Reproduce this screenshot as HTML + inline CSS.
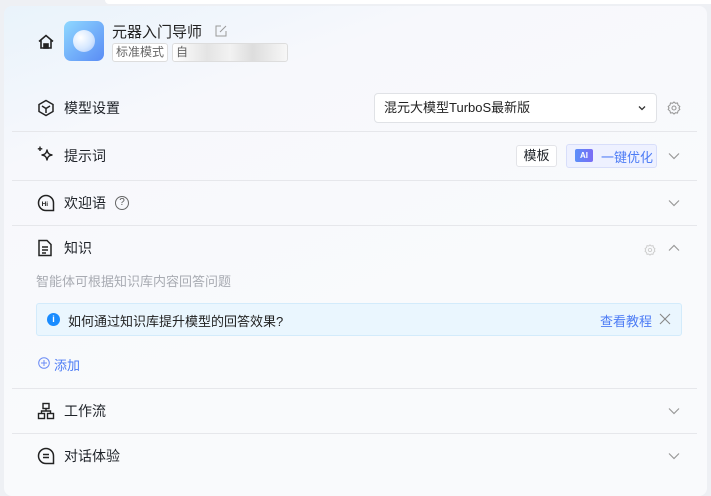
<!DOCTYPE html>
<html><head><meta charset="utf-8"><style>
*{margin:0;padding:0;box-sizing:border-box}
body{width:711px;height:490px;overflow:hidden;background:#eef0f4;font-family:"Liberation Sans","Noto Sans CJK SC",sans-serif;color:#1f2329;position:relative}
.topbar{position:absolute;left:105px;top:0;right:0;height:4px;background:#fff;border-radius:0 0 0 6px}
.panel{position:absolute;left:4px;top:6px;width:703px;height:490px;border-radius:8px;background:linear-gradient(160deg,#e9f3fb 0%,#f7f8fc 22%,#f9fafc 60%);}
.a{position:absolute}
.t{font-size:14px;white-space:nowrap}
.div{position:absolute;left:12px;width:685px;height:1px;background:#e6e7eb}
svg{display:block}
</style></head><body>
<div class="topbar"></div>
<div class="panel"></div>
<svg class="a" style="left:37px;top:33px" width="18" height="18" viewBox="0 0 18 18" fill="none" stroke="#222" stroke-width="1.6"><path d="M2 8.5L9 2.5l7 6M4 7v8h10V7"/><rect x="7" y="11" width="4" height="4" fill="#222"/></svg>
<div class="a" style="left:64px;top:21px;width:40px;height:40px;border-radius:7px;background:linear-gradient(135deg,#8fd8ff,#5a8cf5)"><div style="position:absolute;left:9px;top:9px;width:22px;height:22px;border-radius:50%;background:radial-gradient(circle at 35% 35%,#fff,#d6e8ff 55%,#a5c3fa)"></div></div>
<div class="a" style="left:112px;top:21px;font-size:15px;color:#222">元器入门导师</div>
<svg class="a" style="left:215px;top:25px" width="12" height="12" viewBox="0 0 12 12" fill="none" stroke="#999" stroke-width="1"><path d="M6 1H1v10h10V6M5 7l6-6"/></svg>
<div class="a" style="left:112px;top:43px;height:19px;padding:0 3px;border:1px solid #ddd;border-radius:3px;background:#fff;font-size:12px;color:#666;line-height:17px">标准模式</div>
<div class="a" style="left:172px;top:43px;width:116px;height:19px;border:1px solid #ddd;border-radius:3px;background:linear-gradient(90deg,#fff,#e4e4e4 30%,#f2f2f2 50%,#ddd 70%,#f7f7f7);font-size:12px;color:#666;line-height:17px;padding-left:3px">自</div>
<svg class="a" style="left:37px;top:99px" width="18" height="18" viewBox="0 0 18 18" fill="none" stroke="#222" stroke-width="1.5"><path d="M9 1.5l7 4v7l-7 4-7-4v-7zM5 7l4 2.5L13 7M9 9.5V14"/></svg>
<div class="a t" style="left:64px;top:98px">模型设置</div>
<div class="a" style="left:374px;top:93px;width:283px;height:30px;background:#fff;border:1px solid #e0e2e6;border-radius:4px;font-size:13px;line-height:28px;padding-left:9px;color:#222">混元大模型TurboS最新版</div>
<svg class="a" style="left:636px;top:102px" width="12" height="12" viewBox="0 0 12 12" fill="none" stroke="#333" stroke-width="1.3"><path d="M3 4.5l3 3 3-3"/></svg>
<svg class="a" style="left:667px;top:101px" width="14" height="14" viewBox="0 0 14 14" fill="none" stroke="#999" stroke-width="1.1"><circle cx="7" cy="7" r="2"/><path d="M7 1l1.5 1.3 2-.3.5 2L12.8 5.5 12 7l.8 1.5-1.8 1.5-.5 2-2-.3L7 13l-1.5-1.3-2 .3-.5-2L1.2 8.5 2 7l-.8-1.5L3 4l.5-2 2 .3z"/></svg>
<div class="div" style="top:131px"></div>
<svg class="a" style="left:36px;top:145px" width="19" height="19" viewBox="0 0 19 19" fill="none" stroke="#222" stroke-width="1.4" stroke-linejoin="round"><path d="M11 5c.6 3.2 1.8 4.4 5 5-3.2.6-4.4 1.8-5 5-.6-3.2-1.8-4.4-5-5 3.2-.6 4.4-1.8 5-5z"/><path d="M4 1.5v4.5M1.8 3.8h4.5"/></svg>
<div class="a t" style="left:64px;top:146px">提示词</div>
<div class="a" style="left:516px;top:145px;width:41px;height:22px;background:#fff;border:1px solid #e3e4e8;border-radius:3px;font-size:13px;line-height:20px;text-align:center">模板</div>
<div class="a" style="left:566px;top:144px;width:91px;height:24px;background:#eef1ff;border:1px solid #d8defa;border-radius:3px"></div>
<div class="a" style="left:575px;top:149px;width:18px;height:13px;border-radius:2px;background:linear-gradient(90deg,#5b8ff9,#7a6cf5);color:#fff;font-size:8px;font-weight:bold;line-height:13px;text-align:center">AI</div>
<div class="a" style="left:601px;top:147px;font-size:13px;color:#4d7cf5">一键优化</div>
<svg class="a" style="left:667px;top:150px" width="14" height="12" viewBox="0 0 14 12" fill="none" stroke="#999" stroke-width="1.2"><path d="M2 3.5l5 5 5-5"/></svg>
<div class="div" style="top:180px"></div>
<svg class="a" style="left:37px;top:194px" width="18" height="18" viewBox="0 0 18 18" fill="none" stroke="#222" stroke-width="1.5"><path d="M9 16.5A7.5 7.5 0 1 1 16.5 9v7.5z"/><text x="4.6" y="12" font-size="6.5" font-weight="bold" fill="#222" stroke="none" font-family="Liberation Sans">Hi</text></svg>
<div class="a t" style="left:64px;top:193px">欢迎语</div>
<div class="a" style="left:115px;top:196px;width:14px;height:14px;border:1px solid #666;border-radius:50%;font-size:10px;line-height:12px;text-align:center;color:#555">?</div>
<svg class="a" style="left:667px;top:197px" width="14" height="12" viewBox="0 0 14 12" fill="none" stroke="#999" stroke-width="1.2"><path d="M2 3.5l5 5 5-5"/></svg>
<div class="div" style="top:225px"></div>
<svg class="a" style="left:37px;top:239px" width="16" height="18" viewBox="0 0 16 18" fill="none" stroke="#222" stroke-width="1.5"><path d="M2 1.5h8l4 4v11H2zM5 8h6M5 11h6M5 14h4"/></svg>
<div class="a t" style="left:64px;top:238px">知识</div>
<svg class="a" style="left:644px;top:244px" width="12" height="12" viewBox="0 0 14 14" fill="none" stroke="#ccc" stroke-width="1.1"><circle cx="7" cy="7" r="2"/><path d="M7 1l1.5 1.3 2-.3.5 2L12.8 5.5 12 7l.8 1.5-1.8 1.5-.5 2-2-.3L7 13l-1.5-1.3-2 .3-.5-2L1.2 8.5 2 7l-.8-1.5L3 4l.5-2 2 .3z"/></svg>
<svg class="a" style="left:667px;top:242px" width="14" height="12" viewBox="0 0 14 12" fill="none" stroke="#999" stroke-width="1.2"><path d="M2 8.5l5-5 5 5"/></svg>
<div class="a" style="left:36px;top:271px;font-size:13px;color:#a8abb2">智能体可根据知识库内容回答问题</div>
<div class="a" style="left:36px;top:303px;width:646px;height:33px;background:#eaf6fe;border:1px solid #d3ebfb;border-radius:3px"></div>
<div class="a" style="left:47px;top:313px;width:13px;height:13px;border-radius:50%;background:#1a8cff;color:#fff;font-size:9px;font-weight:bold;line-height:13px;text-align:center">i</div>
<div class="a" style="left:68px;top:311px;font-size:13px;color:#222">如何通过知识库提升模型的回答效果?</div>
<div class="a" style="left:600px;top:311px;font-size:13px;color:#4d7cf5">查看教程</div>
<svg class="a" style="left:659px;top:313px" width="12" height="12" viewBox="0 0 12 12" fill="none" stroke="#888" stroke-width="1.1"><path d="M1 1l10 10M11 1L1 11"/></svg>
<svg class="a" style="left:38px;top:357px" width="12" height="12" viewBox="0 0 12 12" fill="none" stroke="#6b8cf5" stroke-width="1"><circle cx="6" cy="6" r="5.3"/><path d="M6 3v6M3 6h6"/></svg>
<div class="a" style="left:54px;top:355px;font-size:13px;color:#4d7cf5">添加</div>
<div class="div" style="top:388px"></div>
<svg class="a" style="left:37px;top:402px" width="18" height="18" viewBox="0 0 18 18" fill="none" stroke="#222" stroke-width="1.4"><rect x="6" y="1.5" width="6" height="5"/><rect x="1.5" y="11.5" width="6" height="5"/><rect x="10.5" y="11.5" width="6" height="5"/><path d="M9 6.5v2.5M4.5 11.5V9h9v2.5"/></svg>
<div class="a t" style="left:64px;top:401px">工作流</div>
<svg class="a" style="left:667px;top:405px" width="14" height="12" viewBox="0 0 14 12" fill="none" stroke="#999" stroke-width="1.2"><path d="M2 3.5l5 5 5-5"/></svg>
<div class="div" style="top:433px"></div>
<svg class="a" style="left:37px;top:447px" width="18" height="18" viewBox="0 0 18 18" fill="none" stroke="#222" stroke-width="1.5"><path d="M9 16.5A7.5 7.5 0 1 1 16.5 9v7.5zM6 7.5h6M6 10.5h6"/></svg>
<div class="a t" style="left:64px;top:446px">对话体验</div>
<svg class="a" style="left:667px;top:450px" width="14" height="12" viewBox="0 0 14 12" fill="none" stroke="#999" stroke-width="1.2"><path d="M2 3.5l5 5 5-5"/></svg>
</body></html>
